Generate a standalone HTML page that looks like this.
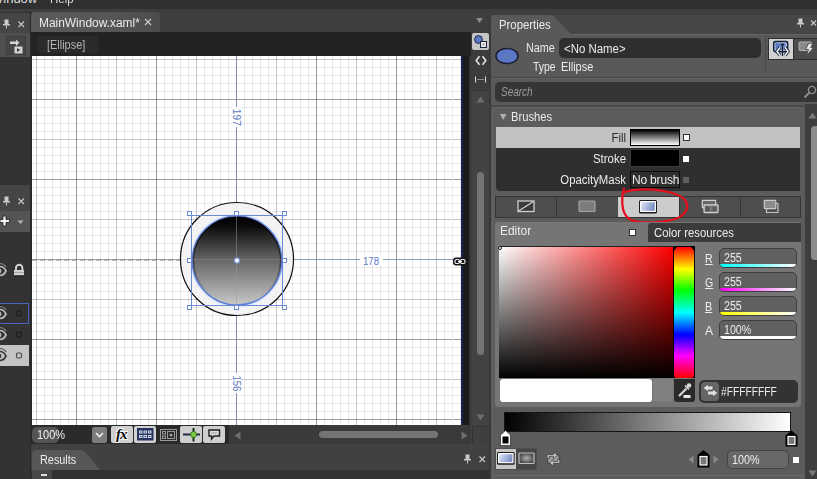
<!DOCTYPE html>
<html>
<head>
<meta charset="utf-8">
<style>
*{box-sizing:border-box;margin:0;padding:0}
html,body{width:817px;height:479px;overflow:hidden;background:#3e3e3e;font-family:"Liberation Sans",sans-serif;font-size:12px;color:#e6e6e6}
.a{position:absolute}
#root{position:relative;width:817px;height:479px;overflow:hidden;background:#3e3e3e}
.t{position:absolute;white-space:nowrap;line-height:14px;font-size:12px;color:#ececec}
svg{position:absolute;overflow:visible}
</style>
</head>
<body>
<div id="root">
<!-- top menu bar -->
<div class="a" style="left:0;top:0;width:817px;height:9px;background:#303030"></div>
<div class="t" style="left:-9px;top:-8px;font-size:13px;color:#d8d8d8">Window</div>
<div class="t" style="left:49.7px;top:-8px;font-size:13px;color:#d8d8d8;transform:scaleX(0.8822);transform-origin:0 0">Help</div>

<!-- LEFTPANEL -->
<div class="a" style="left:0;top:12px;width:32px;height:467px;background:#2a2a2a"></div><div class="a" style="left:0;top:12px;width:30px;height:467px;background:#333"></div>
<div class="a" style="left:0;top:13px;width:30px;height:20px;background:#454545"></div>
<div class="a" style="left:0;top:33px;width:30px;height:24px;background:#4f4f4f"></div>
<div class="a" style="left:6px;top:36px;width:20px;height:19px;background:#454545;border:1px solid #3c3c3c"></div>
<!-- pin + x top -->
<svg style="left:2px;top:19px" width="28" height="12" viewBox="0 0 28 12"><g id="pinx"><path d="M2.5 0.5h4v4.5h1.5v1.5h-7V5h1.5z" fill="#c9c9c9"/><rect x="4" y="6.5" width="1" height="3" fill="#c9c9c9"/><path d="M16.5 2.5l5.5 5.5M22 2.5l-5.5 5.5" stroke="#c9c9c9" stroke-width="1.1" fill="none"/></g></svg>
<!-- icon button -->
<svg style="left:9px;top:38px" width="16" height="16" viewBox="0 0 16 16"><path d="M1 3.5h6V1.5l3.5 3.2L7 8V6H1z" fill="#d4d4d4"/><rect x="5.5" y="8.5" width="8" height="7" fill="#d4d4d4"/><path d="M8 10l3.5 2L8 14z" fill="#444"/></svg>
<!-- second header -->
<div class="a" style="left:0;top:185px;width:30px;height:26px;background:#454545"></div>
<div class="a" style="left:0;top:211px;width:30px;height:21px;background:#545454"></div>
<svg style="left:2px;top:196px" width="28" height="12" viewBox="0 0 28 12"><use href="#pinx"/></svg>
<svg style="left:0px;top:215px" width="28" height="14" viewBox="0 0 28 14"><path d="M3 1h3v3.5h3.5v3H6V11H3V7.5H0v-3h3z" fill="#f0f0f0" stroke="#222" stroke-width="0.8"/><path d="M17.5 5.5h6l-3 3.5z" fill="#b4b4b4"/></svg>
<!-- eye + lock row -->
<svg style="left:0;top:263px" width="28" height="16" viewBox="0 0 28 16"><g id="eye"><path d="M-7 8C-3.5 2 3 2 6 8C3 14 -3.5 14 -7 8z" fill="none" stroke="#bdbdbd" stroke-width="1.7"/><circle cx="-1" cy="8" r="2.4" fill="#bdbdbd"/><path d="M-4 1.5C0 -0.3 4 1 6.2 4" fill="none" stroke="#808080" stroke-width="1.1"/></g><path d="M16 7.5V5a3.2 3.2 0 0 1 6.4 0V7.5" fill="none" stroke="#d4d4d4" stroke-width="1.9"/><rect x="14" y="7" width="10" height="5.5" fill="#d0d0d0"/><rect x="14" y="9" width="10" height="1" fill="#a4a4a4"/><rect x="14" y="12.5" width="10" height="1" fill="#181818"/></svg>
<!-- rows -->
<div class="a" style="left:-1px;top:303px;width:30px;height:21px;background:#323232;border:1px solid #4a66bc"></div>
<div class="a" style="left:0;top:345px;width:29px;height:21px;background:#c4c4c4"></div>
<svg style="left:0;top:306px" width="28" height="16" viewBox="0 0 28 16"><use href="#eye"/><rect x="16.5" y="5" width="5" height="5" rx="1.5" fill="none" stroke="#1c1c1c" stroke-width="1.2"/></svg>
<svg style="left:0;top:327px" width="28" height="16" viewBox="0 0 28 16"><use href="#eye"/><rect x="16.5" y="5" width="5" height="5" rx="1.5" fill="none" stroke="#1c1c1c" stroke-width="1.2"/></svg>
<svg style="left:0;top:348px" width="28" height="16" viewBox="0 0 28 16"><g><path d="M-7 8C-3.5 2 3 2 6 8C3 14 -3.5 14 -7 8z" fill="none" stroke="#3a3a3a" stroke-width="1.7"/><circle cx="-1" cy="8" r="2.4" fill="#3a3a3a"/><path d="M-4 1.5C0 -0.3 4 1 6.2 4" fill="none" stroke="#555" stroke-width="1.1"/></g><rect x="16.5" y="5" width="5" height="5" rx="1.5" fill="none" stroke="#4a4a4a" stroke-width="1.2"/></svg>

<!-- DOCAREA -->
<!-- doc tab strip -->
<div class="a" style="left:31px;top:12px;width:129px;height:21px;background:linear-gradient(to right,#5a5a5a,#565656 60%,#4c4c4c);border-radius:4px 4px 0 0"></div>
<div class="t" style="left:39.0px;top:16px;transform:scaleX(0.9943);transform-origin:0 0">MainWindow.xaml*</div>
<svg style="left:144px;top:18px" width="8" height="8" viewBox="0 0 8 8"><path d="M1 1l6 6M7 1l-6 6" stroke="#d0d0d0" stroke-width="1.1"/></svg>
<svg style="left:476px;top:18px" width="8" height="6" viewBox="0 0 8 6"><path d="M0 0h7L3.5 5z" fill="#8a8a8a"/></svg>
<!-- breadcrumb bar -->
<div class="a" style="left:31px;top:32px;width:440px;height:24px;background:#232323"></div>
<div class="a" style="left:37px;top:36px;width:61px;height:17px;background:#2b2b2b;border-radius:4px"></div>
<div class="t" style="left:46.5px;top:38px;color:#b4b4b4;transform:scaleX(0.9112);transform-origin:0 0">[Ellipse]</div>
<!-- view toggle column -->
<div class="a" style="left:469px;top:56px;width:21px;height:388px;background:#434343"></div><div class="a" style="left:469px;top:56px;width:2px;height:388px;background:#363636"></div><div class="a" style="left:471px;top:32px;width:19px;height:59px;background:#3c3c3c"></div>
<div class="a" style="left:472px;top:33px;width:17px;height:17px;background:#c6c6c6;border-radius:2px"></div>
<svg style="left:472px;top:33px" width="17" height="17" viewBox="0 0 17 17"><circle cx="6.5" cy="6.5" r="3.9" fill="#5a78c8" stroke="#1c2440" stroke-width="1"/><rect x="8.5" y="8.5" width="6" height="6" fill="#e8e8e8" stroke="#1c2440" stroke-width="1"/><rect x="10.5" y="10.5" width="2" height="2" fill="#999"/></svg>
<svg style="left:475px;top:55px" width="12" height="11" viewBox="0 0 12 11"><path d="M4.5 1.2L1.2 5.5L4.5 9.8M7.5 1.2L10.8 5.5L7.5 9.8" fill="none" stroke="#e2e2e2" stroke-width="1.6"/></svg>
<svg style="left:475px;top:76px" width="12" height="8" viewBox="0 0 12 8"><path d="M0.5 0.5v6M10.5 0.5v6" stroke="#dcdcdc" stroke-width="1"/><path d="M2.5 3.5h6.5" stroke="#dcdcdc" stroke-width="1" stroke-dasharray="1 1"/></svg>
<div class="a" style="left:471px;top:90px;width:18px;height:1px;background:#343434"></div>
<!-- v scrollbar -->
<svg style="left:476px;top:96px" width="9" height="7" viewBox="0 0 9 7"><path d="M4.5 0.5L8.5 6.5H0.5z" fill="#6e6e6e"/></svg>
<div class="a" style="left:477px;top:172px;width:7px;height:183px;background:#747474;border-radius:3.5px"></div>
<svg style="left:476px;top:414px" width="9" height="7" viewBox="0 0 9 7"><path d="M0.5 0.5h8L4.5 6.5z" fill="#6e6e6e"/></svg>

<!-- CANVAS -->
<svg id="cv" style="left:32px;top:56px" width="429" height="369" viewBox="0 0 429 369" shape-rendering="crispEdges">
<defs>
<pattern id="gmin" x="4" y="3" width="8" height="8" patternUnits="userSpaceOnUse"><rect x="0" y="0" width="1" height="8" fill="#000" fill-opacity="0.085"/><rect x="0" y="0" width="8" height="1" fill="#000" fill-opacity="0.085"/></pattern>
<pattern id="gmed" x="4" y="3" width="80" height="80" patternUnits="userSpaceOnUse"><rect x="0" y="0" width="1" height="80" fill="#000" fill-opacity="0.15"/><rect x="0" y="0" width="80" height="1" fill="#000" fill-opacity="0.15"/></pattern>
<pattern id="gmaj" x="44" y="43" width="80" height="80" patternUnits="userSpaceOnUse"><rect x="0" y="0" width="1" height="80" fill="#000" fill-opacity="0.33"/><rect x="0" y="0" width="80" height="1" fill="#000" fill-opacity="0.33"/></pattern>
<linearGradient id="egrad" x1="0" y1="0" x2="0" y2="1"><stop offset="0" stop-color="#000"/><stop offset="0.12" stop-color="#0c0c0c"/><stop offset="0.5" stop-color="#676767"/><stop offset="1" stop-color="#c8c8c8"/></linearGradient><linearGradient id="rgrad" x1="0" y1="0" x2="0" y2="1"><stop offset="0" stop-color="#000" stop-opacity="0.7"/><stop offset="0.55" stop-color="#000" stop-opacity="0.45"/><stop offset="0.9" stop-color="#000" stop-opacity="0"/></linearGradient><filter id="bl" x="-10%" y="-10%" width="120%" height="120%"><feGaussianBlur stdDeviation="0.7"/></filter>
</defs>
<rect x="0" y="0" width="429" height="369" fill="#fff"/>
<rect x="0" y="0" width="429" height="369" fill="url(#gmin)"/>
<rect x="0" y="0" width="429" height="369" fill="url(#gmed)"/>
<rect x="0" y="0" width="429" height="369" fill="url(#gmaj)"/>
<!-- faint pink line -->
<rect x="420" y="0" width="1" height="369" fill="#f8e6f3"/>
<!-- blue guides -->
<rect x="204" y="0" width="1" height="51" fill="#828cae"/>
<rect x="204" y="71" width="1" height="86" fill="#828cae"/>
<rect x="204" y="253" width="1" height="63" fill="#828cae"/>
<rect x="204" y="338" width="1" height="31" fill="#828cae"/>
<rect x="254" y="203" width="73" height="1" fill="#8c9cc0"/>
<rect x="352" y="203" width="72" height="1" fill="#8c9cc0"/>
<!-- dashed left -->
<path d="M0 204.5H158" stroke="#b4b4bc" stroke-width="1" stroke-dasharray="5 3"/>
<g shape-rendering="auto">
<circle cx="205" cy="203" r="56.5" fill="#f3f3f3" fill-opacity="0.93" stroke="#111" stroke-width="1.2"/>
<ellipse cx="205" cy="204.5" rx="46" ry="45.6" fill="none" stroke="#dfe8ff" stroke-width="2.2" filter="url(#bl)"/>
<ellipse cx="205" cy="204.5" rx="44.8" ry="44.4" fill="url(#egrad)" stroke="#5d7fd6" stroke-width="1.4"/>
<ellipse cx="205" cy="204.5" rx="43.6" ry="43.2" fill="none" stroke="url(#rgrad)" stroke-width="1.4"/>
<!-- crosshair inside -->
<rect x="204" y="160" width="1" height="90" fill="#9a9a9a" fill-opacity="0.5"/>
<rect x="160" y="203" width="91" height="1" fill="#8a8a8a" fill-opacity="0.45"/>
</g>
<!-- selection box -->
<rect x="159.5" y="159.5" width="91" height="90" fill="none" stroke="#6a8ad8" stroke-width="1" shape-rendering="crispEdges"/>
<g fill="#fff" stroke="#6a8ad8" stroke-width="1">
<rect x="155.5" y="155.5" width="4" height="4"/><rect x="202.5" y="155.5" width="4" height="4"/><rect x="250.5" y="155.5" width="4" height="4"/>
<rect x="155.5" y="202.5" width="4" height="4"/><rect x="250.5" y="202.5" width="4" height="4"/>
<rect x="155.5" y="249.5" width="4" height="4"/><rect x="202.5" y="249.5" width="4" height="4"/><rect x="250.5" y="249.5" width="4" height="4"/>
</g>
<g shape-rendering="auto"><circle cx="205" cy="204.5" r="3.3" fill="#7ea0f0" fill-opacity="0.75"/><circle cx="205" cy="204.5" r="2" fill="#fff"/></g>
<!-- labels -->
<rect x="200" y="51" width="9" height="20" fill="#fff"/><rect x="200" y="317" width="9" height="20" fill="#fff"/><rect x="328" y="199" width="23" height="10" fill="#fff"/>
<g shape-rendering="auto" font-family="Liberation Sans, sans-serif" font-size="10.5" fill="#5a7ac4">
<text transform="translate(201.3,52.8) rotate(90)" font-size="10" textLength="17" lengthAdjust="spacingAndGlyphs">197</text>
<text transform="translate(201.3,319.4) rotate(90)" font-size="10" textLength="16" lengthAdjust="spacingAndGlyphs">156</text>
<text x="331" y="208.8" font-size="10" textLength="16" lengthAdjust="spacingAndGlyphs">178</text>
</g>
</svg>
<div class="a" style="left:461px;top:56px;width:2px;height:369px;background:#15254f"></div>
<div class="a" style="left:463px;top:56px;width:6px;height:369px;background:#1a1a1a"></div>

<svg style="left:453px;top:257px" width="14" height="9" viewBox="0 0 14 9"><rect x="0" y="0.5" width="13.5" height="8" rx="3" fill="#151515"/><rect x="2" y="2.5" width="4.5" height="4" rx="1.5" fill="none" stroke="#f0f0f0" stroke-width="1.2"/><rect x="7.5" y="2.5" width="4.5" height="4" rx="1.5" fill="none" stroke="#f0f0f0" stroke-width="1.2"/><rect x="5" y="4" width="4" height="1.2" fill="#f0f0f0"/></svg>
<!-- BOTTOMBAR -->
<div class="a" style="left:31px;top:425px;width:198px;height:19px;background:#2a2a2a"></div>
<div class="a" style="left:229px;top:425px;width:242px;height:19px;background:#3a3a3a"></div>
<!-- zoom box -->
<div class="a" style="left:32px;top:427px;width:58px;height:16px;background:#2b2b2b;border-radius:4px"></div>
<div class="a" style="left:32px;top:427px;width:27px;height:16px;background:#545454;border-radius:5px"></div>
<div class="t" style="left:36.5px;top:428px;color:#f0f0f0;transform:scaleX(0.9152);transform-origin:0 0">100%</div>
<div class="a" style="left:92px;top:427px;width:15px;height:16px;background:#7c7c7c;border-radius:2px"></div>
<svg style="left:95px;top:432px" width="9" height="6" viewBox="0 0 9 6"><path d="M1 1l3.5 3.5L8 1" fill="none" stroke="#f0f0f0" stroke-width="1.6"/></svg>
<!-- buttons -->
<div class="a" style="left:111px;top:426px;width:22px;height:17px;background:#cfcfcf;border-radius:2px"></div>
<div class="a" style="left:134px;top:426px;width:22px;height:17px;background:#d2d2d6;border-radius:2px"></div>
<div class="a" style="left:180px;top:426px;width:22px;height:17px;background:#cfcfcf;border-radius:2px"></div>
<div class="a" style="left:203px;top:426px;width:22px;height:17px;background:#cfcfcf;border-radius:2px"></div>
<div class="t" style="left:116px;top:427px;font-family:'Liberation Serif',serif;font-style:italic;font-weight:bold;font-size:15px;color:#0a0a0a;letter-spacing:-1px;text-shadow:0 0 1px #fff,0.7px 0.7px 0 #fff,-0.7px -0.7px 0 #fff,0.7px -0.7px 0 #fff,-0.7px 0.7px 0 #fff">fx</div>
<svg style="left:137px;top:428px" width="17" height="13" viewBox="0 0 17 13"><rect x="0" y="0" width="16.5" height="12.5" fill="#24345c"/><g fill="#d4dcf0"><rect x="2" y="2.5" width="3.5" height="3"/><rect x="6.5" y="2.5" width="3.5" height="3"/><rect x="11" y="2.5" width="3.5" height="3"/><rect x="2" y="7" width="3.5" height="3"/><rect x="6.5" y="7" width="3.5" height="3"/><rect x="11" y="7" width="3.5" height="3"/></g><g fill="#24345c"><rect x="3" y="3.5" width="1.5" height="1"/><rect x="7.5" y="3.5" width="1.5" height="1"/><rect x="12" y="3.5" width="1.5" height="1"/><rect x="3" y="8" width="1.5" height="1"/><rect x="7.5" y="8" width="1.5" height="1"/><rect x="12" y="8" width="1.5" height="1"/></g></svg>
<svg style="left:160px;top:429px" width="17" height="12" viewBox="0 0 17 12"><rect x="0.5" y="0.5" width="16" height="11" fill="none" stroke="#9a9a9a" stroke-width="1"/><rect x="2.5" y="2.5" width="3" height="2.5" fill="none" stroke="#9a9a9a"/><rect x="2.5" y="7" width="3" height="2.5" fill="none" stroke="#9a9a9a"/><rect x="7.5" y="2.5" width="7" height="7" fill="none" stroke="#9a9a9a"/><circle cx="11" cy="6" r="1.6" fill="#9a9a9a"/></svg>
<svg style="left:183px;top:428px" width="17" height="14" viewBox="0 0 17 14"><path d="M0 6.5h17" stroke="#1e2a4a" stroke-width="2"/><path d="M10.5 0v13.5" stroke="#143010" stroke-width="2"/><circle cx="10.5" cy="6.5" r="3" fill="#7cc840" stroke="#2a6a10" stroke-width="0.8"/></svg>
<svg style="left:208px;top:429px" width="13" height="12" viewBox="0 0 13 12"><path d="M1 1h10.5v6H6L3.5 10V7H1z" fill="#dcdcdc" stroke="#1c1c1c" stroke-width="1.4"/><path d="M3.2 4h6" stroke="#9a9a9a" stroke-width="1"/></svg>
<!-- h scrollbar -->
<svg style="left:234px;top:431px" width="7" height="9" viewBox="0 0 7 9"><path d="M6.5 0.5v8L0.5 4.5z" fill="#6e6e6e"/></svg>
<div class="a" style="left:319px;top:431px;width:119px;height:7px;background:#747474;border-radius:3.5px"></div>
<svg style="left:461px;top:431px" width="7" height="9" viewBox="0 0 7 9"><path d="M0.5 0.5v8L6.5 4.5z" fill="#6e6e6e"/></svg>
<div class="a" style="left:472px;top:426px;width:18px;height:18px;background:#3f3f3f;border-left:1px solid #333;border-top:1px solid #333"></div>
<!-- results header -->
<div class="a" style="left:31px;top:444px;width:459px;height:26px;background:#414141"></div>
<div class="a" style="left:31px;top:470px;width:459px;height:9px;background:#323232"></div>
<svg style="left:32px;top:450px" width="70" height="20" viewBox="0 0 70 20"><path d="M0 20V4Q0 0 4 0H48Q52 0 54 3L68 20z" fill="#575757"/></svg>
<div class="t" style="left:39.5px;top:453px;transform:scaleX(0.9046);transform-origin:0 0">Results</div>
<div class="a" style="left:32px;top:470px;width:20px;height:9px;background:#484848"></div>
<div class="a" style="left:41px;top:474px;width:6px;height:2px;background:#ddd"></div>
<svg style="left:463px;top:454px" width="28" height="12" viewBox="0 0 28 12"><use href="#pinx"/></svg>

<!-- PROPS -->
<!-- header strip -->
<div class="a" style="left:491px;top:15px;width:326px;height:19px;background:#464646"></div>
<svg style="left:491px;top:15px" width="82" height="19" viewBox="0 0 82 19"><path d="M0 19V4Q0 0 4 0H58Q62 0 64 2.5L80 19z" fill="#595959"/></svg>
<div class="a" style="left:489px;top:15px;width:2px;height:464px;background:#3a3a3a"></div><div class="a" style="left:491px;top:34px;width:326px;height:445px;background:#595959"></div>
<div class="a" style="left:571px;top:34px;width:246px;height:1px;background:#646464"></div>
<div class="t" style="left:499.1px;top:18px;transform:scaleX(0.9451);transform-origin:0 0">Properties</div>
<svg style="left:796px;top:18px" width="28" height="12" viewBox="0 0 28 12"><path d="M2.5 0.5h4v4.5h1.5v1.5h-7V5h1.5z" fill="#c9c9c9"/><rect x="4" y="6.5" width="1" height="3" fill="#c9c9c9"/><path d="M15 2.5l5 5M20 2.5l-5 5" stroke="#c9c9c9" stroke-width="1.1" fill="none"/></svg>
<!-- ellipse icon -->
<svg style="left:494px;top:46px" width="26" height="20" viewBox="0 0 26 20"><ellipse cx="13" cy="10" rx="11" ry="7.5" fill="#5b76c6" stroke="#1a1e30" stroke-width="1.5"/><ellipse cx="13" cy="10.5" rx="4" ry="1.5" fill="#4f8a8a" fill-opacity="0.35"/></svg>
<div class="t" style="left:526.2px;top:41px;transform:scaleX(0.8996);transform-origin:0 0">Name</div>
<div class="a" style="left:559px;top:38px;width:202px;height:20px;background:#2f2f2f;border-radius:5px"></div>
<div class="t" style="left:564.4px;top:42px;transform:scaleX(0.9520);transform-origin:0 0">&lt;No Name&gt;</div>
<div class="t" style="left:532.5px;top:60px;transform:scaleX(0.8649);transform-origin:0 0">Type</div>
<div class="t" style="left:561.3px;top:60px;transform:scaleX(0.9135);transform-origin:0 0">Ellipse</div>
<div class="a" style="left:765px;top:36px;width:1px;height:37px;background:#484848"></div>
<div class="a" style="left:768px;top:38px;width:26px;height:22px;background:#d2d2d2;border:1px solid #2e2e2e"></div>
<div class="a" style="left:794px;top:38px;width:26px;height:22px;background:#4c4c4c;border:1px solid #2e2e2e;border-left:none"></div>
<svg style="left:772px;top:40px" width="20" height="18" viewBox="0 0 20 18"><defs><linearGradient id="pg1" x1="0" y1="0" x2="1" y2="1"><stop offset="0" stop-color="#3f5cae"/><stop offset="1" stop-color="#93a8d8"/></linearGradient></defs><rect x="1.8" y="1.6" width="13.8" height="10" rx="1.5" fill="url(#pg1)" stroke="#14203a" stroke-width="1.6"/><rect x="3" y="2.8" width="11.4" height="7.6" rx="0.5" fill="none" stroke="#e8ecf8" stroke-width="0.7"/><path d="M8 7.5L5 11.5L8 15.5M13 7.5l3 4l-3 4" fill="none" stroke="#14203a" stroke-width="3.2"/><path d="M8 7.5L5 11.5L8 15.5M13 7.5l3 4l-3 4" fill="none" stroke="#fff" stroke-width="1.4"/><path d="M10.5 4.5V16M9 4.5h3" fill="none" stroke="#14203a" stroke-width="1.3"/></svg>
<svg style="left:797px;top:40px" width="20" height="18" viewBox="0 0 20 18"><rect x="2" y="2" width="12.5" height="8.5" rx="1" fill="#8a8a8a" stroke="#b4b4b4" stroke-width="1"/><path d="M11.5 3.5L16 3L13.5 7.5h3L9.5 15.5L11.5 9.5H8.5z" fill="#e6e6e6" stroke="#3c3c3c" stroke-width="0.8"/></svg>
<div class="a" style="left:491px;top:77px;width:326px;height:1px;background:#484848"></div>
<div class="a" style="left:491px;top:78px;width:326px;height:1px;background:#626262"></div>
<!-- search -->
<div class="a" style="left:495px;top:82px;width:326px;height:20px;background:#353535;border-radius:5px"></div>
<div class="t" style="left:500.7px;top:85px;font-style:italic;color:#9c9c9c;transform:scaleX(0.8309);transform-origin:0 0">Search</div>
<svg style="left:803px;top:85px" width="14" height="14" viewBox="0 0 14 14"><circle cx="9" cy="5" r="3.6" fill="none" stroke="#909090" stroke-width="1.4"/><path d="M6.3 7.7L1.5 12.5" stroke="#909090" stroke-width="1.8"/></svg>
<div class="a" style="left:491px;top:105px;width:326px;height:2px;background:#484848"></div>
<!-- brushes section -->
<div class="a" style="left:492px;top:107px;width:312px;height:372px;background:#5c5c5c;border-radius:5px 5px 0 0;border-top:1px solid #686868;border-left:1px solid #636363"></div>
<svg style="left:499.5px;top:114px" width="7" height="7" viewBox="0 0 7 7"><path d="M0 0h6.5L3.2 6z" fill="#b0b0b0"/></svg>
<div class="t" style="left:511.2px;top:110px;transform:scaleX(0.9334);transform-origin:0 0">Brushes</div>
<div class="a" style="left:496px;top:127px;width:304px;height:64px;background:#2f2f2f;border-radius:0 0 0 4px"></div>
<div class="a" style="left:496px;top:127px;width:304px;height:21px;background:#c2c2c2"></div>
<div class="t" style="left:526px;top:131px;width:100px;text-align:right;color:#2c2c2c;transform:scaleX(0.9525);transform-origin:100% 0">Fill</div>
<div class="t" style="left:526px;top:152px;width:100px;text-align:right;transform:scaleX(0.9514);transform-origin:100% 0">Stroke</div>
<div class="t" style="left:526px;top:173px;width:100px;text-align:right;transform:scaleX(0.9472);transform-origin:100% 0">OpacityMask</div>
<div class="a" style="left:630px;top:129px;width:50px;height:17px;border:1px solid #000;background:linear-gradient(#000,#fff)"></div>
<div class="a" style="left:630px;top:149px;width:50px;height:18px;border:1px solid #3c3c3c;background:#000"></div>
<div class="a" style="left:630px;top:171px;width:50px;height:17px;border:1px solid #0c0c0c;background:#2f2f2f"></div>
<div class="t" style="left:631.5px;top:173px;letter-spacing:-0.2px;transform:scaleX(1.0023);transform-origin:0 0">No brush</div>
<div class="a" style="left:683px;top:134px;width:7px;height:7px;background:#fff;border:1px solid #333"></div>
<div class="a" style="left:683px;top:156px;width:6px;height:6px;background:#fff"></div>
<div class="a" style="left:683px;top:177px;width:6px;height:6px;background:#5e5e5e"></div>
<!-- tab row -->
<div class="a" style="left:495px;top:196px;width:306px;height:22px;background:#4e4e4e;border:1px solid #363636"></div>
<div class="a" style="left:556px;top:197px;width:1px;height:20px;background:#363636"></div>
<div class="a" style="left:618px;top:197px;width:61px;height:20px;background:#cccccc"></div>
<div class="a" style="left:679px;top:197px;width:1px;height:20px;background:#363636"></div>
<div class="a" style="left:740px;top:197px;width:1px;height:20px;background:#363636"></div>
<svg style="left:517px;top:200px" width="18" height="13" viewBox="0 0 18 13"><rect x="1" y="1" width="16" height="10.5" fill="#3a3a3a" stroke="#d0d0d0" stroke-width="1.3"/><path d="M1.5 11L16.5 1.5" stroke="#d0d0d0" stroke-width="1.3"/></svg>
<svg style="left:578px;top:200px" width="18" height="13" viewBox="0 0 18 13"><rect x="1" y="1" width="16" height="10.5" rx="1" fill="#7c7c7c" stroke="#a4a4a4" stroke-width="1.2"/></svg>
<svg style="left:639px;top:200px" width="18" height="14" viewBox="0 0 18 14"><defs><linearGradient id="lg1" x1="0" y1="0" x2="1" y2="0.3"><stop offset="0" stop-color="#dfe6f6"/><stop offset="1" stop-color="#7f93c8"/></linearGradient></defs><rect x="0" y="0" width="18" height="13.5" rx="1.5" fill="#1c1c1c"/><rect x="1" y="1" width="16" height="11" rx="0.8" fill="#fff"/><rect x="2.2" y="2.2" width="13.6" height="8.6" fill="url(#lg1)"/></svg>
<svg style="left:701px;top:199px" width="19" height="15" viewBox="0 0 19 15"><rect x="1.3" y="1.3" width="13.4" height="7.5" rx="0.8" fill="#686868" stroke="#cfcfcf" stroke-width="1.2"/><rect x="3" y="5.9" width="14" height="7.7" rx="0.8" fill="#7a7a7a" stroke="#d4d4d4" stroke-width="1.2"/><rect x="4.5" y="7.5" width="4" height="4.5" fill="#555"/><rect x="11.5" y="7.5" width="4" height="4.5" fill="#5a5a5a"/></svg>
<svg style="left:763px;top:199px" width="17" height="15" viewBox="0 0 17 15"><path d="M3.5 10v3.5H15V4.5H13" fill="none" stroke="#c4c4c4" stroke-width="1.2"/><rect x="1.3" y="1.3" width="11.5" height="8.3" rx="0.8" fill="#8c8c8c" stroke="#cacaca" stroke-width="1.2"/></svg>
<!-- red scribble -->
<svg style="left:615px;top:185px" width="80" height="40" viewBox="0 0 80 40"><path d="M9 3.5C7.5 8 6.8 14 7.3 19C7.8 26 10 31.5 15 34.5C22 37.5 35 37.8 45 36.8C55 35.8 63 34 67 30.5C71 27 72.8 23 72 19C71 14 66 11 60 9C52 6 40 4.4 30 4.4C22 4.4 14 5.3 8.5 7.5" fill="none" stroke="#e4101c" stroke-width="2.3" stroke-linecap="round"/></svg>
<!-- editor panel -->
<div class="a" style="left:495px;top:222px;width:306px;height:185px;background:#757575;border-radius:3px"></div>
<div class="t" style="left:500.1px;top:224px;transform:scaleX(0.9949);transform-origin:0 0">Editor</div>
<div class="a" style="left:629px;top:229px;width:7px;height:7px;background:#fff;border:1px solid #333"></div>
<div class="a" style="left:648px;top:223px;width:153px;height:19px;background:#3b3b3b;border-radius:3px 0 0 0"></div>
<div class="t" style="left:654.2px;top:226px;transform:scaleX(0.9433);transform-origin:0 0">Color resources</div>
<!-- color picker -->
<div class="a" style="left:499px;top:246px;width:174px;height:132px;background:linear-gradient(to bottom,#222 0,#222 1px,rgba(0,0,0,0) 1px,#000 100%),linear-gradient(to right,#fff,#f00)"></div>
<div class="a" style="left:499px;top:247px;width:4px;height:4px;border:1px solid #222;border-radius:50%;background:#fff;margin:-1px 0 0 -1px"></div>
<div class="a" style="left:673px;top:246px;width:22px;height:132px;background:#000"></div>
<div class="a" style="left:674px;top:246.5px;width:20px;height:131.5px;clip-path:polygon(3.5px 0,16.5px 0,20px 4px,20px 100%,0 100%,0 4px);border-radius:0 0 3px 3px;background:linear-gradient(to bottom,#f00 0%,#ff0 17%,#0f0 33%,#0ff 50%,#00f 67%,#f0f 83%,#f00 100%)"></div>
<!-- RGBA -->
<div class="t" style="left:704.9px;top:252px;text-decoration:underline;transform:scaleX(0.8879);transform-origin:0 0">R</div>
<div class="t" style="left:704.9px;top:276px;text-decoration:underline;transform:scaleX(0.8776);transform-origin:0 0">G</div>
<div class="t" style="left:704.9px;top:300px;text-decoration:underline;transform:scaleX(0.8982);transform-origin:0 0">B</div>
<div class="t" style="left:704.7px;top:324px;transform:scaleX(1.0105);transform-origin:0 0">A</div>
<div class="a" style="left:719px;top:248px;width:78px;height:20px;background:#606060;border:1px solid #3e3e3e;border-radius:5px;overflow:hidden"><div class="a" style="left:0;bottom:0;width:100%;height:3px;background:linear-gradient(to right,#0ff,#fff)"></div></div>
<div class="a" style="left:719px;top:272px;width:78px;height:20px;background:#606060;border:1px solid #3e3e3e;border-radius:5px;overflow:hidden"><div class="a" style="left:0;bottom:0;width:100%;height:3px;background:linear-gradient(to right,#f0f,#fff)"></div></div>
<div class="a" style="left:719px;top:296px;width:78px;height:20px;background:#606060;border:1px solid #3e3e3e;border-radius:5px;overflow:hidden"><div class="a" style="left:0;bottom:0;width:100%;height:3px;background:linear-gradient(to right,#ff0,#fff)"></div></div>
<div class="a" style="left:719px;top:320px;width:78px;height:20px;background:#606060;border:1px solid #3e3e3e;border-radius:5px;overflow:hidden"><div class="a" style="left:0;bottom:0;width:100%;height:3px;background:#fff"></div></div>
<div class="t" style="left:724.0px;top:251px;transform:scaleX(0.8886);transform-origin:0 0">255</div>
<div class="t" style="left:724.0px;top:275px;transform:scaleX(0.8886);transform-origin:0 0">255</div>
<div class="t" style="left:724.0px;top:299px;transform:scaleX(0.8886);transform-origin:0 0">255</div>
<div class="t" style="left:724.0px;top:323px;transform:scaleX(0.8892);transform-origin:0 0">100%</div>
<!-- preview row -->
<div class="a" style="left:500px;top:379px;width:152px;height:23px;background:#fff;border-radius:3px"></div>
<div class="a" style="left:653px;top:379px;width:20px;height:23px;background:#808080;border-radius:3px"></div>
<div class="a" style="left:674px;top:379px;width:21px;height:23px;background:#2a2a2a;border-radius:0 0 3px 3px"></div>
<svg style="left:676px;top:381px" width="18" height="20" viewBox="0 0 18 20"><path d="M3 15L10.5 7.5" stroke="#d8d8d8" stroke-width="2.2"/><path d="M9 4.5l4 4" stroke="#d8d8d8" stroke-width="1.6"/><circle cx="13" cy="4.5" r="2.3" fill="#d8d8d8"/><rect x="7.5" y="14" width="7" height="3" fill="#e8e8e8"/></svg>
<div class="a" style="left:699px;top:380px;width:99px;height:23px;background:#333;border-radius:5px"></div>
<div class="a" style="left:701px;top:382px;width:18px;height:19px;background:#666;border-radius:4px"></div>
<svg style="left:703px;top:384px" width="15" height="14" viewBox="0 0 15 14"><path d="M0.2 4L5.2 0V2.1H10V5.9H5.2V8z" fill="#dedede" stroke="#333" stroke-width="0.5"/><path d="M14.8 9L9.8 5V7.1H4.6V10.9H9.8V13z" fill="#dedede" stroke="#333" stroke-width="0.5"/></svg>
<div class="t" style="left:720.7px;top:385px;transform:scaleX(0.8541);transform-origin:0 0">#FFFFFFFF</div>
<!-- gradient bar -->
<div class="a" style="left:504px;top:412px;width:287px;height:20px;border:1px solid #141414;background:linear-gradient(to right,#000,#fff)"></div>
<svg style="left:500px;top:430px" width="11" height="16" viewBox="0 0 11 16"><path d="M0.5 5L5.5 0.5L10.5 5V15.5H0.5z" fill="#fff" stroke="#333" stroke-width="0.8"/><rect x="2.5" y="6.5" width="6" height="7" fill="#000"/></svg>
<svg style="left:785px;top:430px" width="13" height="17" viewBox="0 0 13 17"><path d="M0.5 5.5L6.5 0.5L12.5 5.5V16.5H0.5z" fill="#000"/><rect x="3" y="6.5" width="7" height="8" fill="#777" stroke="#fff" stroke-width="1.2"/></svg>
<!-- bottom row -->
<div class="a" style="left:495px;top:448px;width:42px;height:22px;background:#464646;border:1px solid #4e4e4e"></div>
<div class="a" style="left:496px;top:449px;width:20px;height:20px;background:#c6c6c6"></div>
<svg style="left:497px;top:452px" width="18" height="13" viewBox="0 0 18 13"><rect x="0" y="0" width="17.6" height="12.8" rx="1.5" fill="#1c1c1c"/><rect x="1" y="1" width="15.6" height="10.3" rx="0.8" fill="#fff"/><rect x="2.2" y="2.2" width="13.2" height="7.9" fill="url(#lg1)"/></svg>
<svg style="left:518px;top:452px" width="17" height="13" viewBox="0 0 17 13"><defs><radialGradient id="rg1"><stop offset="0" stop-color="#b0b0b0"/><stop offset="1" stop-color="#4a4a4a"/></radialGradient></defs><rect x="1" y="1" width="15" height="10.5" rx="0.8" fill="url(#rg1)" stroke="#bdbdbd" stroke-width="1.2"/></svg>
<svg style="left:545px;top:451px" width="17" height="16" viewBox="0 0 17 16"><rect x="2.5" y="4" width="11.5" height="8" fill="#9c9c9c" stroke="#3c3c3c" stroke-width="0.8"/><path d="M2 7.5V3.5h6.5V1L12.5 4.2L8.5 7.4V5.3H4.2V7.5z" fill="#c4c4c4" stroke="#3a3a3a" stroke-width="0.7"/><path d="M14.8 8.5v4h-6.5v2.5L4.3 11.8L8.3 8.6v2.1h4.3V8.5z" fill="#c4c4c4" stroke="#3a3a3a" stroke-width="0.7"/></svg>
<svg style="left:688px;top:455px" width="6" height="9" viewBox="0 0 6 9"><path d="M5.5 0.5v8L0.5 4.5z" fill="#8a8a8a"/></svg>
<svg style="left:697px;top:449px" width="13" height="19" viewBox="0 0 13 19"><path d="M0.5 6L6.5 1L12.5 6V18.5H0.5z" fill="#000"/><rect x="3" y="7.5" width="7" height="8.5" fill="#777" stroke="#fff" stroke-width="1.2"/></svg>
<svg style="left:713px;top:455px" width="6" height="9" viewBox="0 0 6 9"><path d="M0.5 0.5v8L5.5 4.5z" fill="#8a8a8a"/></svg>
<div class="a" style="left:727px;top:450px;width:62px;height:19px;background:#686868;border:1px solid #444;border-radius:5px"></div>
<div class="t" style="left:731.7px;top:453px;transform:scaleX(0.8989);transform-origin:0 0">100%</div>
<div class="a" style="left:793px;top:457px;width:6px;height:6px;background:#fff"></div>
<div class="a" style="left:493px;top:475px;width:311px;height:1px;background:#6a6a6a"></div>
<!-- right scrollbar -->
<div class="a" style="left:805px;top:104px;width:12px;height:375px;background:#3e3e3e"></div>
<svg style="left:808px;top:112px" width="9" height="7" viewBox="0 0 9 7"><path d="M4.5 0.5L8.5 6.5H0.5z" fill="#7a7a7a"/></svg>
<div class="a" style="left:811px;top:126px;width:10px;height:134px;background:#8c8c8c;border-radius:4px"></div>
<svg style="left:808px;top:470px" width="9" height="7" viewBox="0 0 9 7"><path d="M0.5 0.5h8L4.5 6.5z" fill="#7a7a7a"/></svg>

</div>
</body>
</html>
